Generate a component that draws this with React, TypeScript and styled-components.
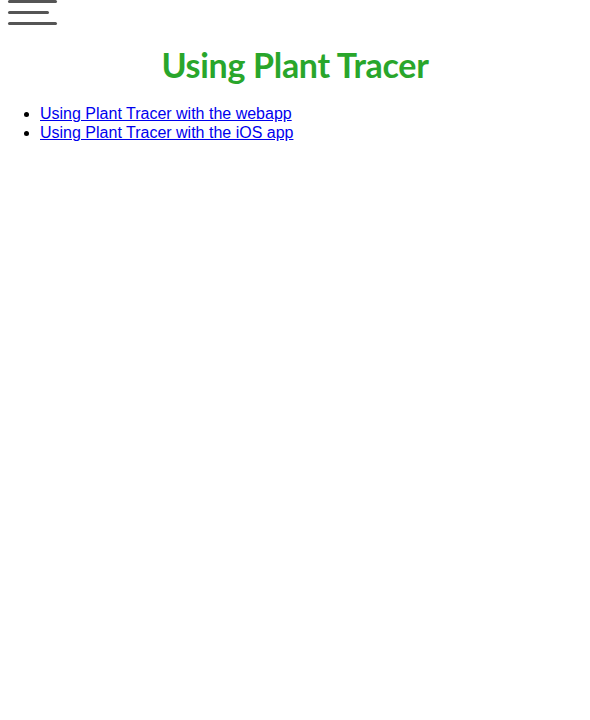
import React from "react";
import styled, { createGlobalStyle } from "styled-components";

const Global = createGlobalStyle`
  html, body { margin: 0; padding: 0; background: #fff; }
  body { font-family: "Liberation Sans", Arial, sans-serif; font-size: 16px; }
`;

const Page = styled.div`
  display: flex;
  flex-direction: column;
  padding: 0 8px;
`;

const Burger = styled.button`
  display: flex;
  flex-direction: column;
  gap: 8px;
  width: 50px;
  padding: 0;
  margin: 0;
  border: none;
  background: none;
  cursor: pointer;
`;

const Bar = styled.span<{ $w: number }>`
  display: block;
  height: 3px;
  width: ${(p) => p.$w}px;
  background: #555;
  border-radius: 2px;
`;

const Title = styled.h1`
  margin: 20px 0 0;
  text-align: center;
  font-family: Lato, "Noto Sans", sans-serif;
  font-weight: 700;
  font-size: 34px;
  line-height: 40px;
  color: #29a62b;
  letter-spacing: -0.3px;
`;

const List = styled.ul`
  margin: 19px 0 0;
  padding-left: 32px;
  line-height: 19.2px;
`;

const Link = styled.a`
  color: #0000ee;
  text-decoration: underline;
`;

export default function App() {
  return (
    <>
      <Global />
      <Page>
        <Burger aria-label="menu">
          <Bar $w={49} />
          <Bar $w={41} />
          <Bar $w={49} />
        </Burger>
        <Title>Using Plant Tracer</Title>
        <List>
          <li><Link href="#">Using Plant Tracer with the webapp</Link></li>
          <li><Link href="#">Using Plant Tracer with the iOS app</Link></li>
        </List>
      </Page>
    </>
  );
}
